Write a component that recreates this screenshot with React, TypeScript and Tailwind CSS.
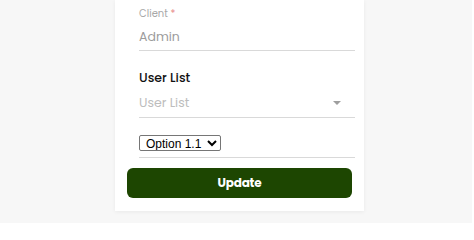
export default function App() {
  return (
    <div className="w-[472px] bg-[#f7f7f7] pb-3 font-['Poppins','Open_Sans',sans-serif]">
      <div className="ml-[115px] w-[249px] bg-white pt-[6px] pb-[13px] shadow-[0_1px_4px_rgba(0,0,0,0.06)]">
        <div className="pl-6 pr-[9px]">
          <div className="text-[10px] leading-4 text-[#a8a8a8]">
            Client <span className="text-[#e88a8a]">*</span>
          </div>
          <div className="mt-[5px] border-b border-[#d9d9d9] pb-[3px] text-[12.5px] leading-5 text-[#9c9c9c]">
            Admin
          </div>

          <div className="mt-[17px] text-[12.5px] font-medium leading-5 text-[#111]">User List</div>
          <div className="mt-[5px] flex items-center justify-between border-b border-[#d9d9d9] pb-[4px] pr-[14px]">
            <span className="text-[12.5px] leading-5 text-[#bdbdbd]">User List</span>
            <span className="h-0 w-0 border-x-[4px] border-t-[4px] border-x-transparent border-t-[#9e9e9e]" />
          </div>

          <div className="border-b border-[#d9d9d9] pt-[17px] pb-[6px]">
            <select
              defaultValue="1.1"
              className="block h-4 w-[82px] rounded-[2px] border border-[#767676] bg-white pl-[2px] font-['Liberation_Sans',Arial,sans-serif] text-[12px] leading-none text-black"
            >
              <option value="1.1">Option 1.1</option>
              <option value="1.2">Option 1.2</option>
            </select>
          </div>
        </div>

        <div className="mx-3 mt-[10px]">
          <button className="flex h-[30px] w-full items-center justify-center rounded-[6px] bg-[#1d4601] text-[12px] font-bold tracking-[-0.2px] text-white">
            Update
          </button>
        </div>
      </div>
    </div>
  )
}
